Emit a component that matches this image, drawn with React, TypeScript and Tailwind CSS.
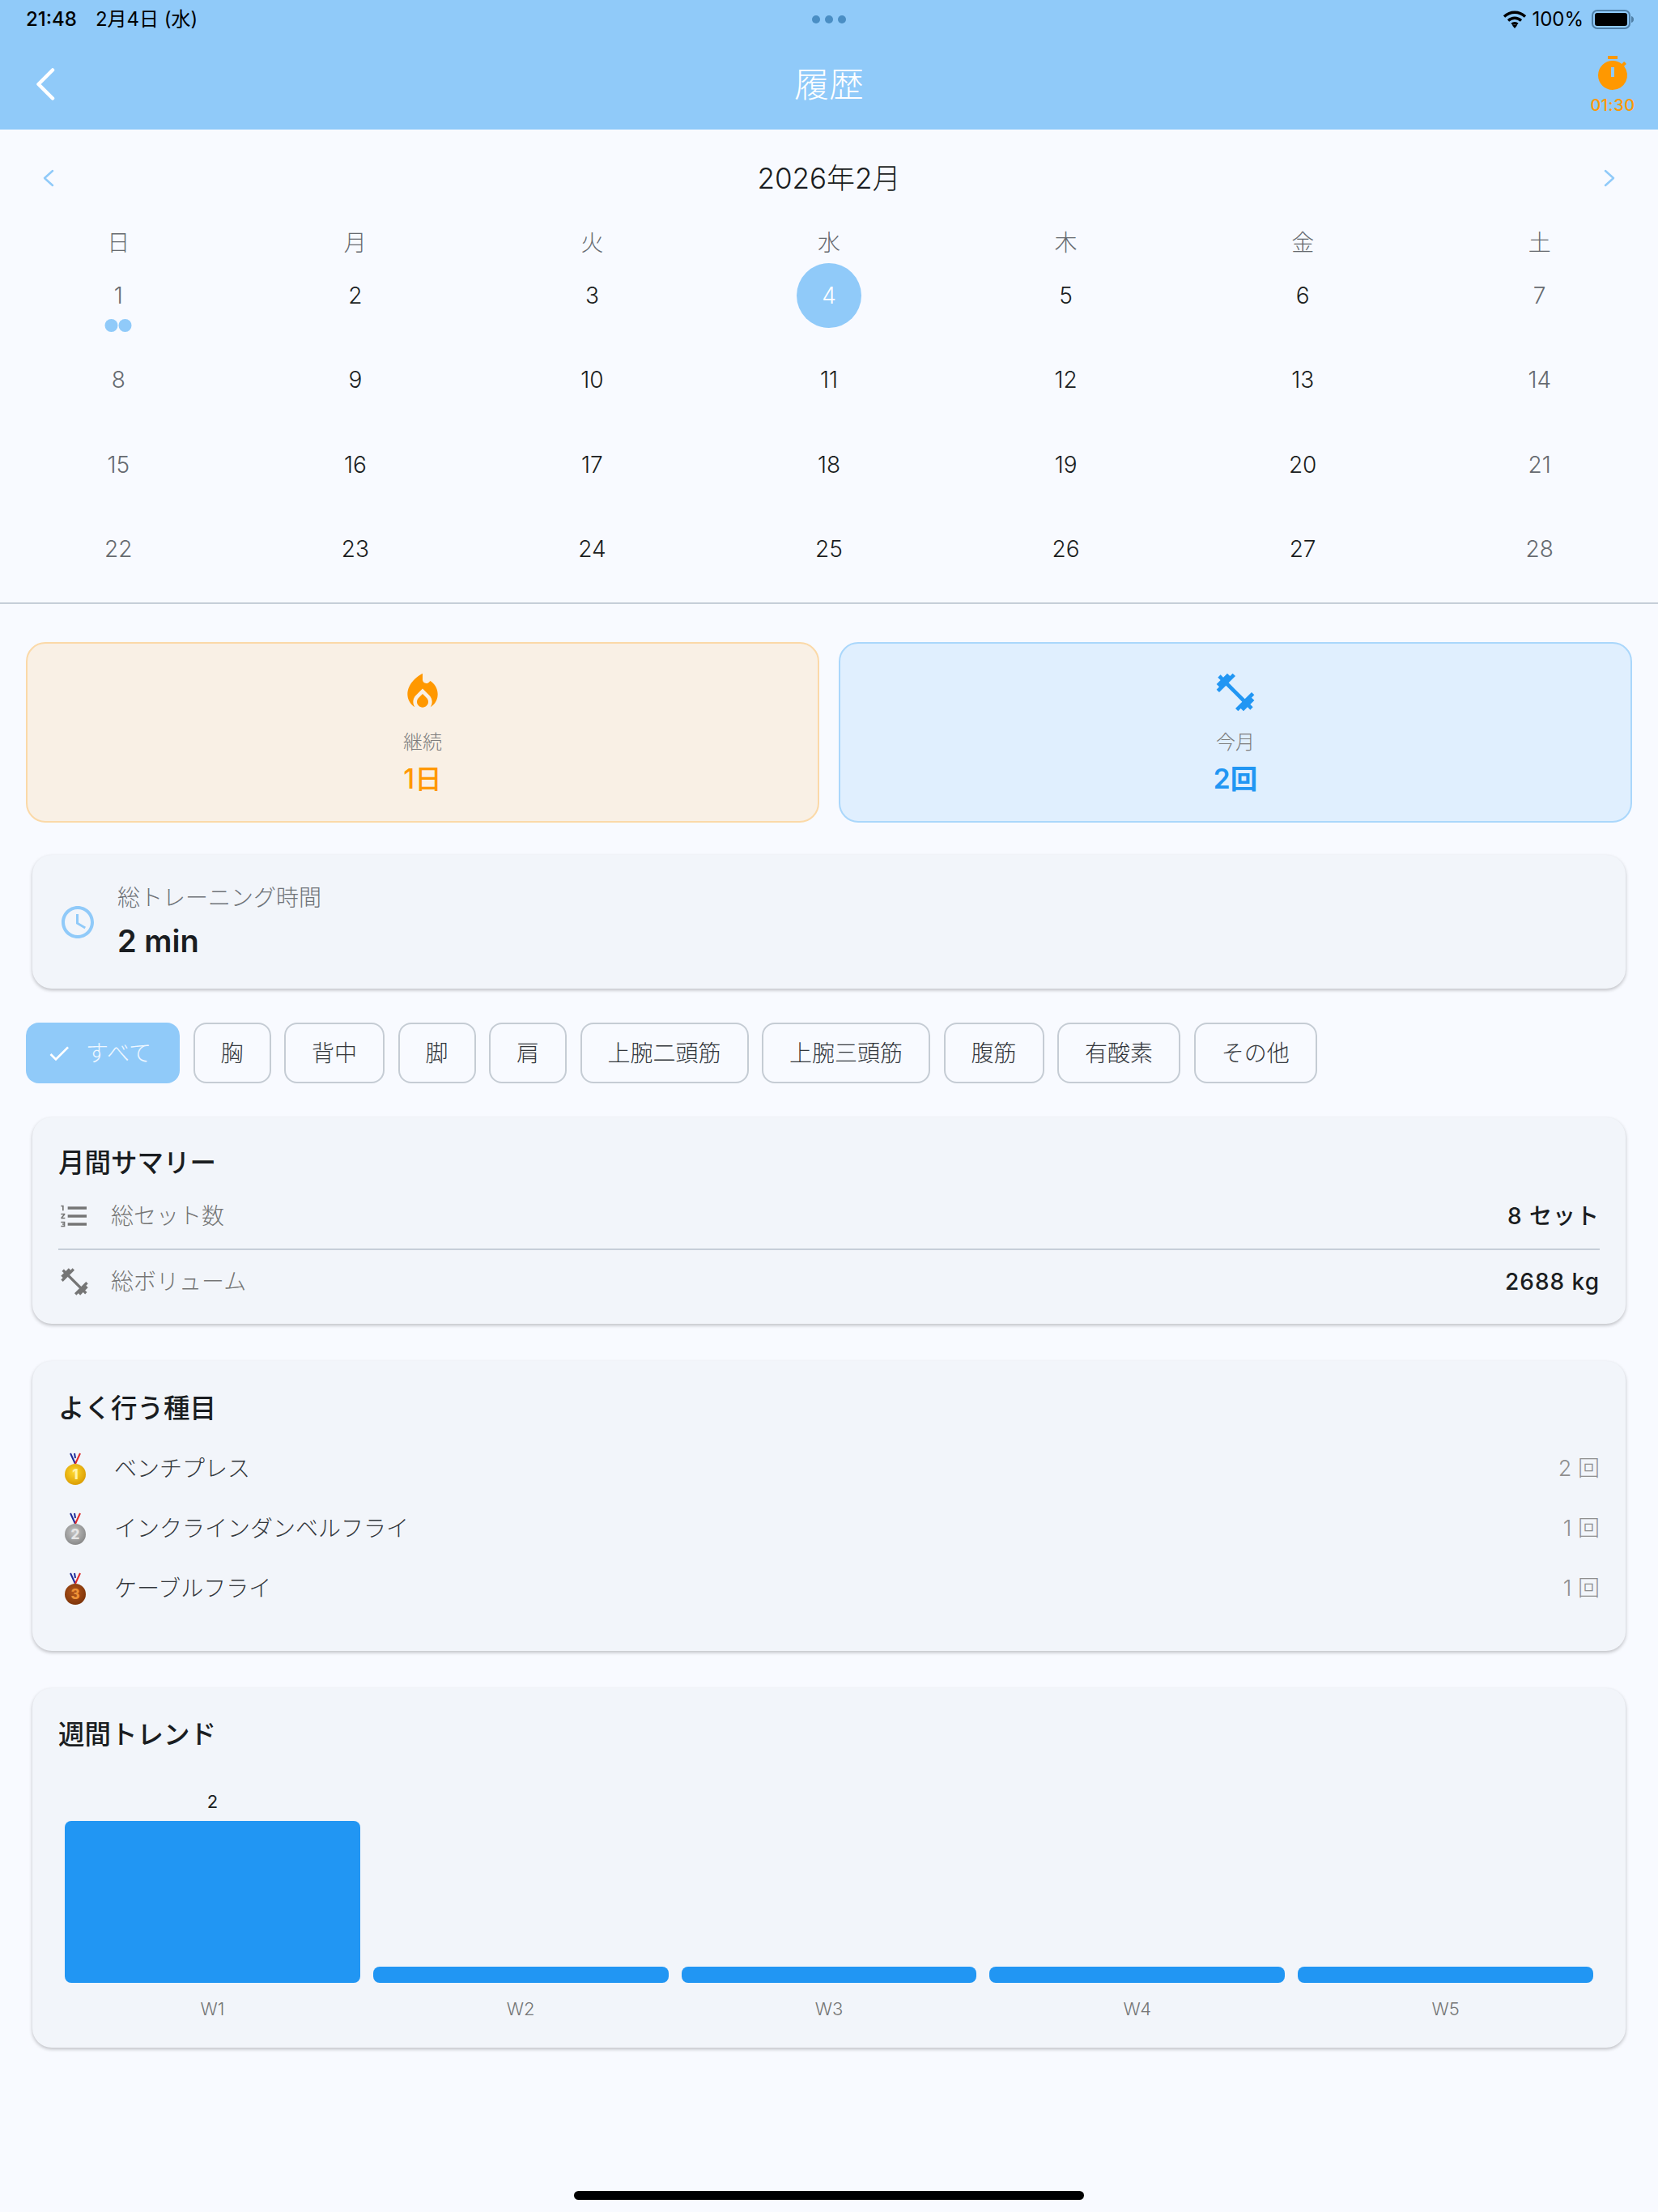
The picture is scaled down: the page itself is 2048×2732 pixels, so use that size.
import { MdAccessTime, MdCheck, MdFitnessCenter, MdFormatListNumbered, MdLocalFireDepartment, MdTimer } from 'react-icons/md';

const WEEKDAYS = ['日', '月', '火', '水', '木', '金', '土'];
const DAYS = Array.from({ length: 28 }, (_, i) => i + 1);
const CHIPS = ['胸', '背中', '脚', '肩', '上腕二頭筋', '上腕三頭筋', '腹筋', '有酸素', 'その他'];
const EXERCISES = [
  { name: 'ベンチプレス', count: '2 回', rank: 1 },
  { name: 'インクラインダンベルフライ', count: '1 回', rank: 2 },
  { name: 'ケーブルフライ', count: '1 回', rank: 3 },
];
const WEEKS = [
  { label: 'W1', value: 2 },
  { label: 'W2', value: 0 },
  { label: 'W3', value: 0 },
  { label: 'W4', value: 0 },
  { label: 'W5', value: 0 },
];

const MEDAL_COLORS: Record<number, { light: string; dark: string; text: string }> = {
  1: { light: '#ffd92e', dark: '#d99a00', text: '#fff3a8' },
  2: { light: '#c4c4c4', dark: '#858585', text: '#e6e6e6' },
  3: { light: '#b5561a', dark: '#7a3208', text: '#ee9236' },
};

function Medal({ rank }: { rank: number }) {
  const c = MEDAL_COLORS[rank];
  return (
    <svg width="26" height="40" viewBox="0 0 26 40" className="shrink-0">
      <defs>
        <radialGradient id={`medal-${rank}`} cx="45%" cy="40%" r="65%">
          <stop offset="0%" stopColor={c.light} />
          <stop offset="100%" stopColor={c.dark} />
        </radialGradient>
      </defs>
      <path d="M7 1l6 13 M12 1l1 6" stroke="#1e2a9a" strokeWidth="2" fill="none" />
      <path d="M19 1l-6 13" stroke="#e02b2b" strokeWidth="2" fill="none" />
      <circle cx="13" cy="27" r="13" fill={`url(#medal-${rank})`} />
      <text x="13" y="33" textAnchor="middle" fontSize="17" fontWeight="800" fontFamily="Inter, sans-serif" fill={c.text}>
        {rank}
      </text>
    </svg>
  );
}

function Card({ className, children }: { className: string; children: React.ReactNode }) {
  return (
    <section className={`mx-[40px] rounded-[24px] bg-[#f2f5fa] shadow-[0_2px_4px_rgba(0,0,0,0.24)] ${className}`}>
      {children}
    </section>
  );
}

export default function App() {
  return (
    <div className="relative h-[2732px] w-[2048px] overflow-hidden bg-[#f8faff] font-['Inter','Noto_Sans_CJK_JP',sans-serif] text-[#1a1d21]">
      {/* Header */}
      <header className="h-[160px] bg-[#90caf9]">
        <div className="grid h-[48px] grid-cols-[1fr_auto_1fr] items-center px-[32px] text-[24px] text-black">
          <div className="flex gap-[23px]">
            <span className="font-medium">21:48</span>
            <span>2月4日 (水)</span>
          </div>
          <div className="flex gap-[6px]">
            <span className="h-[10px] w-[10px] rounded-full bg-[#4a8ec4]" />
            <span className="h-[10px] w-[10px] rounded-full bg-[#4a8ec4]" />
            <span className="h-[10px] w-[10px] rounded-full bg-[#4a8ec4]" />
          </div>
          <div className="flex items-center justify-end gap-[6px]">
            <svg width="30" height="24" viewBox="0 0 30 24" fill="none" stroke="#000" strokeWidth="3.4">
              <path d="M2 8.5C9.5 1.5 20.5 1.5 28 8.5" />
              <path d="M7 13.5c4.800-4.300 11.200-4.300 16 0" />
              <path d="M11.500 18c2-1.800 5-1.800 7 0" />
              <path d="M15 23l-3-3.500c1.800-1.300 4.200-1.300 6 0z" fill="#000" stroke="none" />
            </svg>
            <span>100%</span>
            <svg width="52" height="24" viewBox="0 0 52 24" className="ml-[4px] mr-[-2px]">
              <rect x="1" y="1" width="46" height="22" rx="6" fill="none" stroke="#4f7fa6" strokeWidth="2" />
              <rect x="4" y="4" width="40" height="16" rx="3" fill="#000" />
              <path d="M49 8c2 .5 3 2 3 4s-1 3.500-3 4z" fill="#4f7fa6" />
            </svg>
          </div>
        </div>
        <div className="grid h-[112px] grid-cols-[1fr_auto_1fr] items-center px-[30px]">
          <svg width="24" height="40" viewBox="0 0 24 40" fill="none" stroke="#fff" strokeWidth="4.500" strokeLinecap="round" strokeLinejoin="round" className="ml-[14px]">
            <path d="M21 2.500L3.500 20 21 37.500" />
          </svg>
          <h1 className="text-[43px] font-light leading-none text-white">履歴</h1>
          <div className="flex flex-col items-end">
            <div className="flex w-[52px] flex-col items-center">
              <MdTimer className="h-[48px] w-[48px] text-[#ff9800]" />
              <span className="mt-[3px] text-[20px] font-medium leading-[24px] tracking-[0.5px] text-[#ff9800]">01:30</span>
            </div>
          </div>
        </div>
      </header>

      {/* Calendar */}
      <div className="h-[586px] border-b-2 border-[#c6ced8]">
        <div className="flex h-[120px] items-center justify-between px-[44px]">
          <svg width="32" height="32" viewBox="0 0 32 32" fill="none" stroke="#90caf9" strokeWidth="2.500" strokeLinecap="round" strokeLinejoin="round">
            <path d="M21 7l-10 9 10 9" />
          </svg>
          <span className="text-[35px] font-light leading-none">2026年2月</span>
          <svg width="32" height="32" viewBox="0 0 32 32" fill="none" stroke="#90caf9" strokeWidth="2.500" strokeLinecap="round" strokeLinejoin="round">
            <path d="M11 7l10 9-10 9" />
          </svg>
        </div>
        <div className="grid h-[40px] grid-cols-7 items-center text-center text-[28px] font-light leading-none text-[#666a70]">
          {WEEKDAYS.map((d) => (
            <span key={d}>{d}</span>
          ))}
        </div>
        <div className="grid grid-cols-7 auto-rows-[104.3px]">
          {DAYS.map((day, i) => {
            const weekend = i % 7 === 0 || i % 7 === 6;
            return (
              <div key={day} className="relative flex justify-center pt-[5px]">
                <span
                  className={`flex h-[80px] w-[80px] items-center justify-center rounded-full text-[28px] font-light ${
                    day === 4 ? 'bg-[#90caf9] text-white' : weekend ? 'text-[#666a70]' : 'text-[#1a1d21]'
                  }`}
                >
                  {day}
                </span>
                {day === 1 && (
                  <div className="absolute left-1/2 top-[74px] flex -translate-x-1/2 gap-[1px]">
                    <span className="h-[16px] w-[16px] rounded-full bg-[#90caf9]" />
                    <span className="h-[16px] w-[16px] rounded-full bg-[#90caf9]" />
                  </div>
                )}
              </div>
            );
          })}
        </div>
      </div>

      {/* Stats */}
      <div className="mx-[32px] mt-[47px] grid h-[223px] grid-cols-2 gap-[24px]">
        <div className="flex flex-col items-center rounded-[24px] border-2 border-[#fbd9a8] bg-[#f9f0e5] pt-[32px]">
          <MdLocalFireDepartment className="h-[56px] w-[56px] text-[#ff9800]" />
          <span className="mt-[17px] text-[24px] font-light leading-[34px] text-[#7d7d7d]">継続</span>
          <span className="mt-[6px] text-[33.500px] font-medium leading-[44px] text-[#ff9800]">1日</span>
        </div>
        <div className="flex flex-col items-center rounded-[24px] border-2 border-[#aad7fb] bg-[#e0effe] pt-[32px]">
          <MdFitnessCenter className="h-[56px] w-[56px] text-[#2196f3]" />
          <span className="mt-[17px] text-[24px] font-light leading-[34px] text-[#7d7d7d]">今月</span>
          <span className="mt-[6px] text-[33.500px] font-semibold leading-[44px] text-[#2196f3]">2回</span>
        </div>
      </div>

      {/* Total time */}
      <Card className="mt-[40px] flex h-[165px] items-center pl-[32px]">
        <MdAccessTime className="h-[48px] w-[48px] text-[#90caf9]" />
        <div className="ml-[25px]">
          <p className="mt-[-2px] text-[28px] font-light leading-[40px] text-[#6f7378]">総トレーニング時間</p>
          <p className="mt-[9px] text-[38px] font-semibold leading-[48px]">2 min</p>
        </div>
      </Card>

      {/* Filter chips */}
      <div className="ml-[32px] mt-[42px] flex h-[75px] gap-[16.5px]">
        <div className="flex w-[190px] items-center rounded-[16px] bg-[#90caf9] pl-[25px] text-[28px] font-light text-[#eef7ff]">
          <MdCheck className="h-[32px] w-[32px] text-white" />
          <span className="ml-[17px]">すべて</span>
        </div>
        {CHIPS.map((chip) => (
          <div key={chip} className="flex items-center rounded-[16px] border-2 border-[#c5ccd4] px-[32px] text-[28px] font-light text-[#33373c]">
            {chip}
          </div>
        ))}
      </div>

      {/* Monthly summary */}
      <Card className="mt-[42px] h-[255px] px-[32px] pt-[35px]">
        <h2 className="text-[32.500px] font-medium leading-[44px]">月間サマリー</h2>
        <div className="flex h-[85px] items-center border-b-2 border-[#c6ced8] pt-[3px]">
          <MdFormatListNumbered className="h-[40px] w-[40px] text-[#757575]" />
          <span className="ml-[25px] text-[28px] font-light text-[#757575]">総セット数</span>
          <span className="ml-auto text-[28px] font-medium tracking-[1px]">8 セット</span>
        </div>
        <div className="flex h-[77px] items-center">
          <MdFitnessCenter className="h-[40px] w-[40px] text-[#757575]" />
          <span className="ml-[25px] text-[28px] font-light text-[#757575]">総ボリューム</span>
          <span className="ml-auto text-[28px] font-medium tracking-[1px]">2688 kg</span>
        </div>
      </Card>

      {/* Frequent exercises */}
      <Card className="mt-[46px] h-[358px] px-[32px] pt-[37px]">
        <h2 className="text-[32.500px] font-medium leading-[44px]">よく行う種目</h2>
        <div className="mt-[15px]">
          {EXERCISES.map((e) => (
            <div key={e.name} className="flex h-[74px] items-center">
              <div className="flex w-[69px] pl-[8px]">
                <Medal rank={e.rank} />
              </div>
              <span className="text-[28px] font-light text-[#33373c]">{e.name}</span>
              <span className="ml-auto text-[27px] font-light text-[#8f8f8f]">{e.count}</span>
            </div>
          ))}
        </div>
      </Card>

      {/* Weekly trend */}
      <Card className="mt-[46px] h-[444px] px-[32px] pt-[36px]">
        <h2 className="text-[32.500px] font-medium leading-[44px]">週間トレンド</h2>
        <div className="mx-[8px] mt-[45px] flex h-[239px] items-end gap-[16px]">
          {WEEKS.map((w) => (
            <div key={w.label} className="flex flex-1 flex-col items-center">
              {w.value > 0 && <span className="mb-[9px] text-[22px] leading-[30px] text-[#1a1d21]">{w.value}</span>}
              <div className={`w-full rounded-[8px] bg-[#2196f3] ${w.value > 0 ? 'h-[200px]' : 'h-[20px]'}`} />
            </div>
          ))}
        </div>
        <div className="mx-[8px] mt-[16px] flex gap-[16px]">
          {WEEKS.map((w) => (
            <span key={w.label} className="flex-1 text-center text-[22px] font-light leading-[32px] text-[#757575]">
              {w.label}
            </span>
          ))}
        </div>
      </Card>

      {/* Home indicator, sits over the page */}
      <div className="absolute bottom-[15px] left-1/2 h-[11px] w-[630px] -translate-x-1/2 rounded-full bg-black" />
    </div>
  );
}
